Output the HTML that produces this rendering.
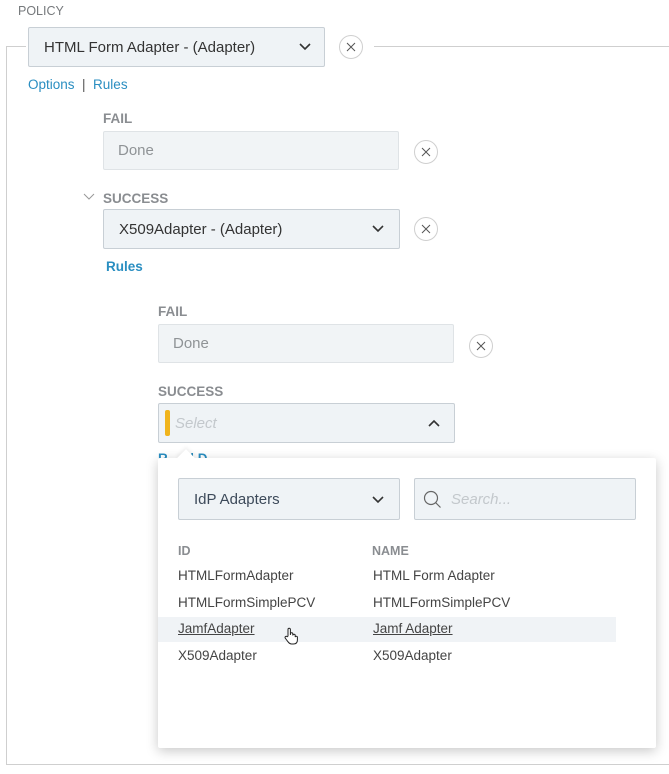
<!DOCTYPE html>
<html><head><style>
*{box-sizing:border-box;margin:0;padding:0}
body{width:669px;height:774px;background:#fff;font-family:"Liberation Sans",sans-serif;position:relative;overflow:hidden;color:#333}
.a{position:absolute}
.lbl{position:absolute;font-size:13.5px;font-weight:bold;color:#8a8d91}
.sel{position:absolute;background:#eff3f6;border:1px solid #c8cfd5;border-radius:2px;font-size:15px;color:#333;padding-left:15px;display:flex;align-items:center}
.ro{position:absolute;background:#f1f4f6;border:1px solid #dfe3e6;border-radius:2px;font-size:15px;color:#8f9396;padding-left:14px;display:flex;align-items:center}
.x{position:absolute;width:24px;height:24px;border:1px solid #cfcfcf;border-radius:50%;background:#fff}
.lnk{position:absolute;font-size:13.5px;color:#2a8ec1;font-weight:bold}
.cell{position:absolute;font-size:13.5px;color:#444}
</style></head><body>
<div class="a" style="left:18px;top:4px;font-size:12.5px;color:#76797c">POLICY</div>
<div class="a" style="left:6px;top:46px;width:700px;height:719px;border-left:1px solid #cfcfcf;border-top:1px solid #cfcfcf;border-bottom:1px solid #cfcfcf"></div>
<div class="a" style="left:26px;top:40px;width:348px;height:14px;background:#fff"></div>

<div class="sel" style="left:28px;top:27px;width:297px;height:40px">HTML Form Adapter - (Adapter)
<svg class="a" style="left:270px;top:15px" width="12" height="8"><path d="M1 1l5 5 5-5" fill="none" stroke="#333" stroke-width="1.6"/></svg></div>
<div class="x" style="left:339px;top:35px"><svg width="22" height="22"><path d="M7 7l8 8M15 7l-8 8" stroke="#555" stroke-width="1"/></svg></div>
<div class="lnk" style="left:28px;top:77px;font-weight:normal">Options&nbsp; <span style="color:#555">|</span>&nbsp; Rules</div>

<div class="lbl" style="left:103px;top:111px">FAIL</div>
<div class="ro" style="left:103px;top:131px;width:296px;height:39px">Done</div>
<div class="x" style="left:414px;top:140px"><svg width="22" height="22"><path d="M7 7l8 8M15 7l-8 8" stroke="#555" stroke-width="1"/></svg></div>

<svg class="a" style="left:83px;top:193px" width="12" height="8"><path d="M1 1l5 5 5-5" fill="none" stroke="#999" stroke-width="1"/></svg>
<div class="lbl" style="left:103px;top:191px">SUCCESS</div>
<div class="sel" style="left:103px;top:209px;width:297px;height:40px">X509Adapter - (Adapter)
<svg class="a" style="left:268px;top:15px" width="12" height="8"><path d="M1 1l5 5 5-5" fill="none" stroke="#333" stroke-width="1.6"/></svg></div>
<div class="x" style="left:414px;top:217px"><svg width="22" height="22"><path d="M7 7l8 8M15 7l-8 8" stroke="#555" stroke-width="1"/></svg></div>
<div class="lnk" style="left:106px;top:259px">Rules</div>

<div class="lbl" style="left:158px;top:304px">FAIL</div>
<div class="ro" style="left:158px;top:324px;width:296px;height:39px">Done</div>
<div class="x" style="left:469px;top:334px"><svg width="22" height="22"><path d="M7 7l8 8M15 7l-8 8" stroke="#555" stroke-width="1"/></svg></div>

<div class="lbl" style="left:158px;top:384px">SUCCESS</div>
<div class="sel" style="left:158px;top:403px;width:297px;height:40px;padding-left:16px;color:#c3c8cc;font-style:italic">Select
<div class="a" style="left:6px;top:6px;width:5px;height:26px;background:#f0b41c;border-radius:2px"></div>
<svg class="a" style="left:269px;top:15px" width="12" height="8"><path d="M1 7l5-5 5 5" fill="none" stroke="#333" stroke-width="1.6"/></svg></div>
<div class="lnk" style="left:158px;top:451px">R&nbsp;&nbsp;&nbsp;&nbsp;&nbsp;&nbsp;| D</div>

<div class="a" style="left:158px;top:458px;width:498px;height:290px;background:#fff;box-shadow:0 3px 12px rgba(0,0,0,.22);border-radius:2px"></div>
<div class="a" style="left:179px;top:452px;width:14px;height:14px;background:#fff;transform:rotate(45deg);box-shadow:-2px -2px 3px rgba(0,0,0,.05)"></div>
<div class="a" style="left:170px;top:458px;width:40px;height:10px;background:#fff"></div>

<div class="sel" style="left:178px;top:478px;width:222px;height:42px;color:#3d4a5a">IdP Adapters
<svg class="a" style="left:193px;top:17px" width="12" height="8"><path d="M1 1l5 5 5-5" fill="none" stroke="#333" stroke-width="1.6"/></svg></div>
<div class="sel" style="left:414px;top:478px;width:222px;height:42px;padding-left:36px;color:#c3c8cc;font-style:italic">Search...
<svg class="a" style="left:8px;top:11px" width="20" height="20"><circle cx="8" cy="8" r="6.5" fill="none" stroke="#666" stroke-width="1.2"/><path d="M12.5 12.5l5 5" stroke="#666" stroke-width="1.2"/></svg></div>

<div class="lbl" style="left:178px;top:544px;font-size:12.5px">ID</div>
<div class="lbl" style="left:372px;top:544px;font-size:12.5px">NAME</div>
<div class="a" style="left:158px;top:617px;width:458px;height:25px;background:#f0f3f6"></div>
<div class="cell" style="left:178px;top:568px">HTMLFormAdapter</div>
<div class="cell" style="left:373px;top:568px">HTML Form Adapter</div>
<div class="cell" style="left:178px;top:595px">HTMLFormSimplePCV</div>
<div class="cell" style="left:373px;top:595px">HTMLFormSimplePCV</div>
<div class="cell" style="left:178px;top:621px;text-decoration:underline">JamfAdapter</div>
<div class="cell" style="left:373px;top:621px;text-decoration:underline">Jamf Adapter</div>
<svg class="a" style="left:284px;top:627px" width="14" height="18"><path d="M4 9V2.5a1.2 1.2 0 0 1 2.4 0V8V7a1.2 1.2 0 0 1 2.4 0v1.5a1.2 1.2 0 0 1 2.4 0V10a1.2 1.2 0 0 1 2.2 0v3c0 2.5-1.5 4-4 4H7.5C5.5 17 4.5 15.5 3 13.5L1.2 11a1.2 1.2 0 0 1 2-1.3z" fill="#fff" stroke="#222" stroke-width="1"/></svg>
<div class="cell" style="left:178px;top:648px">X509Adapter</div>
<div class="cell" style="left:373px;top:648px">X509Adapter</div>
</body></html>
